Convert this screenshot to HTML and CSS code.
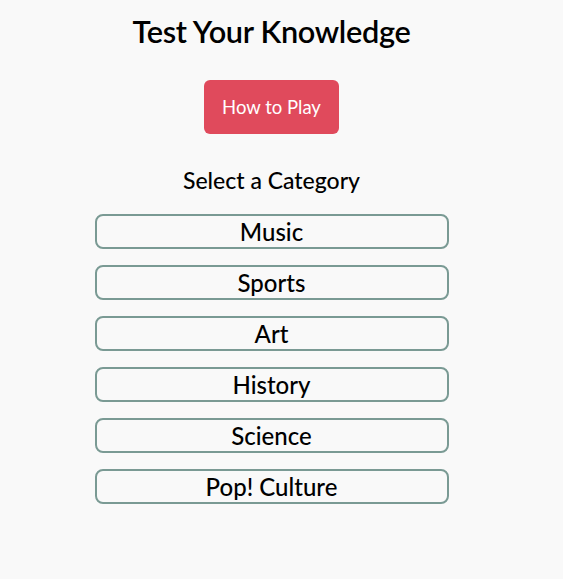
FILE: index.html
```html
<!DOCTYPE html>
<html>
<head>
<meta charset="utf-8">
<link rel="stylesheet" href="styles.css">
</head>
<body>
<main class="page">
  <h1 class="title">Test Your Knowledge</h1>
  <button class="how">How to Play</button>
  <h2 class="subtitle">Select a Category</h2>
  <div class="cats">
    <button class="cat">Music</button>
    <button class="cat">Sports</button>
    <button class="cat">Art</button>
    <button class="cat">History</button>
    <button class="cat">Science</button>
    <button class="cat">Pop! Culture</button>
  </div>
</main>
</body>
</html>
```
FILE: styles.css
```css
html, body {
  margin: 0;
  padding: 0;
  background: #f9f9f9;
}
body {
  font-family: "Lato", "Open Sans", sans-serif;
  color: #000;
}
.page {
  width: 543px;
  display: flex;
  flex-direction: column;
  align-items: center;
}
.title {
  margin: 14px 0 0;
  font-size: 30.7px;
  font-weight: 600;
  line-height: 36px;
  letter-spacing: -0.3px;
}
.how {
  margin-top: 30px;
  width: 135px;
  height: 54px;
  border: none;
  border-radius: 6px;
  background: #e04a5c;
  color: #fff;
  font-family: inherit;
  font-size: 18.5px;
}
.subtitle {
  margin: 32px 0 0;
  font-size: 23px;
  font-weight: 500;
  line-height: 28px;
}
.cats {
  margin-top: 20px;
  display: flex;
  flex-direction: column;
  gap: 16px;
}
.cat {
  width: 354px;
  height: 35px;
  border: 2px solid #7a9a94;
  border-radius: 8px;
  background: transparent;
  font-family: inherit;
  font-size: 24px;
  font-weight: 500;
  color: #000;
  padding: 0;
  line-height: 30px;
}
```
